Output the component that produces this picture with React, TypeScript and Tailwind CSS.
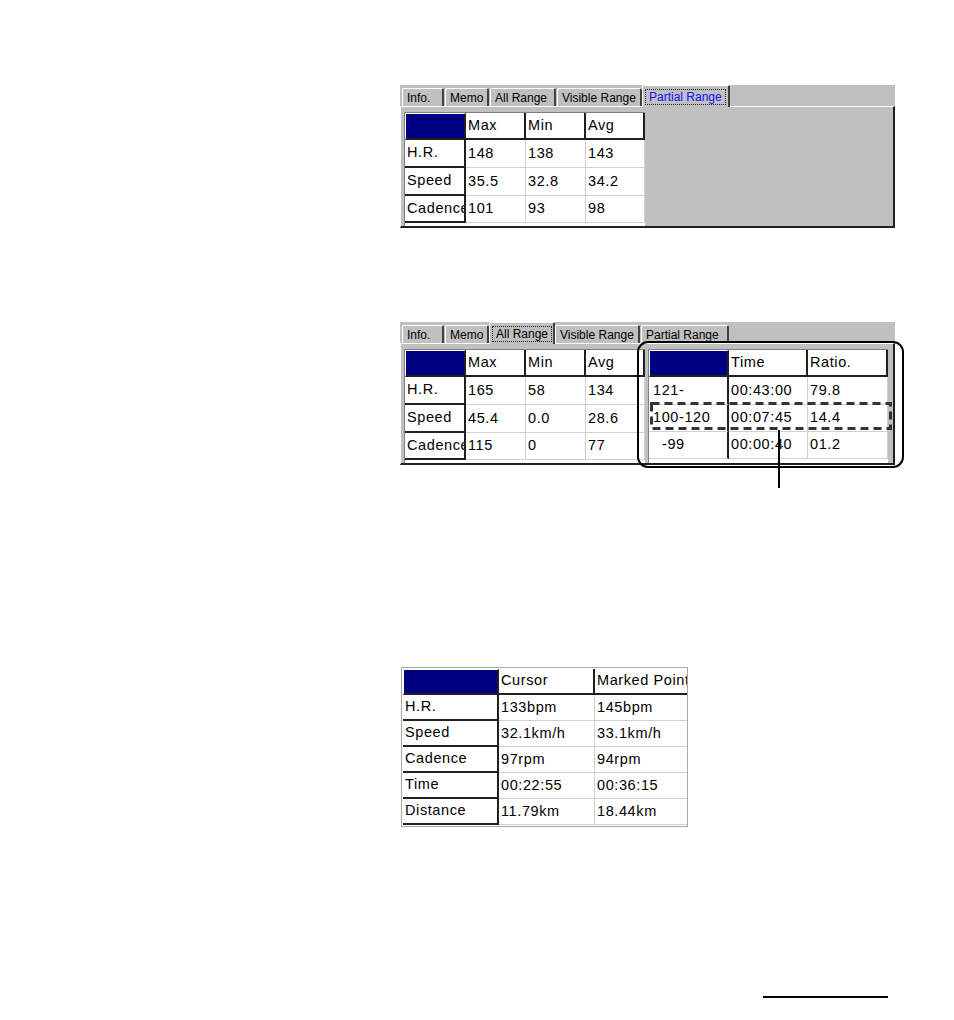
import React from "react";

const FONT = { fontFamily: '"Liberation Sans", Arial, sans-serif' };

type TabDef = { label: string; w: number };
const TABS: TabDef[] = [
  { label: "Info.", w: 42 },
  { label: "Memo", w: 44 },
  { label: "All Range", w: 66 },
  { label: "Visible Range", w: 85 },
  { label: "Partial Range", w: 88 },
];

function Tabs({ selected, blue }: { selected: number; blue?: boolean }) {
  return (
    <div className="flex items-end h-[21px] pl-[2px] gap-[1px]">
      {TABS.map((t, i) => {
        const sel = i === selected;
        return (
          <div
            key={t.label}
            style={{ width: t.w }}
            className={
              sel
                ? "relative z-10 h-[22px] -mb-px -mx-[1px] bg-[#c0c0c0] border-t border-l border-white border-r-2 border-r-[#404040] rounded-t-[2px] flex items-center px-[2px]"
                : "h-[18px] bg-[#c0c0c0] border-t border-l border-white border-r-2 border-r-[#404040] rounded-t-[2px] flex items-center px-[4px]"
            }
          >
            {sel ? (
              <span
                className={
                  "border border-dotted border-[#202020] px-[3px] leading-[14px] text-[12px] whitespace-nowrap " +
                  (blue ? "text-[#1010ff]" : "text-black")
                }
              >
                {t.label}
              </span>
            ) : (
              <span className="text-[12px] whitespace-nowrap text-black">{t.label}</span>
            )}
          </div>
        );
      })}
    </div>
  );
}

type Kind = "corner" | "head" | "label" | "data" | "labelData";

function Cell({ kind, w, h, text, indent }: { kind: Kind; w: number; h: number; text?: string; indent?: number }) {
  let cls = "shrink-0 flex items-center overflow-hidden whitespace-nowrap text-[14.5px] tracking-[0.6px] text-black ";
  if (kind === "corner") cls += "bg-[#000080] border-r-2 border-b-2 border-[#202020] border-t border-l border-t-white border-l-white";
  else if (kind === "head") cls += "bg-white border-r-2 border-b-2 border-[#202020] pl-[2px]";
  else if (kind === "label") cls += "bg-white border-r-2 border-b-2 border-[#202020] pl-[2px]";
  else if (kind === "labelData") cls += "bg-white border-r-2 border-r-[#202020] border-b border-b-[#d0d0d0] pl-[4px]";
  else cls += "bg-white border-r border-b border-[#d0d0d0] pl-[2px]";
  return (
    <div className={cls} style={{ width: w, height: h, paddingLeft: indent }}>
      {text}
    </div>
  );
}

function StatTable({ rows }: { rows: string[][] }) {
  const widths = [61, 60, 60, 59];
  const heights = [27, 28, 28, 27];
  return (
    <div className="border-t border-l border-[#808080] bg-white">
      {rows.map((r, ri) => (
        <div key={ri} className="flex">
          {r.map((c, ci) => (
            <Cell
              key={ci}
              kind={ri === 0 ? (ci === 0 ? "corner" : "head") : ci === 0 ? "label" : "data"}
              w={widths[ci]}
              h={heights[ri]}
              text={c}
            />
          ))}
        </div>
      ))}
    </div>
  );
}

const T1 = [
  ["", "Max", "Min", "Avg"],
  ["H.R.", "148", "138", "143"],
  ["Speed", "35.5", "32.8", "34.2"],
  ["Cadence", "101", "93", "98"],
];
const T2 = [
  ["", "Max", "Min", "Avg"],
  ["H.R.", "165", "58", "134"],
  ["Speed", "45.4", "0.0", "28.6"],
  ["Cadence", "115", "0", "77"],
];
const Z = [
  ["", "Time", "Ratio."],
  ["121-", "00:43:00", "79.8"],
  ["100-120", "00:07:45", "14.4"],
  ["-99", "00:00:40", "01.2"],
];
const P3 = [
  ["", "Cursor", "Marked Point"],
  ["H.R.", "133bpm", "145bpm"],
  ["Speed", "32.1km/h", "33.1km/h"],
  ["Cadence", "97rpm", "94rpm"],
  ["Time", "00:22:55", "00:36:15"],
  ["Distance", "11.79km", "18.44km"],
];

function ZoneTable() {
  const widths = [80, 79, 80];
  const heights = [27, 28, 27, 27];
  return (
    <div className="border-t border-l border-[#808080] bg-white">
      {Z.map((r, ri) => (
        <div key={ri} className="flex">
          {r.map((c, ci) => (
            <Cell
              key={ci}
              kind={ri === 0 ? (ci === 0 ? "corner" : "head") : ci === 0 ? "labelData" : "data"}
              w={widths[ci]}
              h={heights[ri]}
              text={c}
              indent={ri === 3 && ci === 0 ? 13 : undefined}
            />
          ))}
        </div>
      ))}
    </div>
  );
}

function Panel({ children, selected, blue }: { children: React.ReactNode; selected: number; blue?: boolean }) {
  return (
    <div className="w-[495px] bg-[#c0c0c0]">
      <Tabs selected={selected} blue={blue} />
      <div className="h-[122px] border-t border-l border-t-white border-l-white border-r-2 border-b-2 border-r-[#202020] border-b-[#202020] pt-[5px] pl-[3px] flex gap-[3px]">
        {children}
      </div>
    </div>
  );
}

export default function App() {
  return (
    <div className="relative w-[954px] h-[1020px] bg-white overflow-hidden" style={FONT}>
      <div className="pt-[85px] pl-[400px]">
        <Panel selected={4} blue>
          <StatTable rows={T1} />
        </Panel>
      </div>
      <div className="pt-[94px] pl-[400px]">
        <Panel selected={2}>
          <StatTable rows={T2} />
          <ZoneTable />
        </Panel>
      </div>
      <div className="pt-[202px] pl-[401px]">
        <div className="w-[287px] border border-[#a8a8a8] p-px bg-white">
          <div className="overflow-hidden w-[284px]">
            {P3.map((r, ri) => (
              <div key={ri} className="flex">
                {r.map((c, ci) => (
                  <Cell
                    key={ci}
                    kind={ri === 0 ? (ci === 0 ? "corner" : "head") : ci === 0 ? "label" : "data"}
                    w={ci === 2 ? 94 : 96}
                    h={26}
                    text={c}
                  />
                ))}
              </div>
            ))}
          </div>
        </div>
      </div>
      <div className="pt-[169px] pl-[763px]">
        <div className="w-[125px] h-[2px] bg-black" />
      </div>

      {/* callout overlays */}
      <div className="absolute left-[637px] top-[341px] w-[267px] h-[127px] border-2 border-black rounded-[11px] pointer-events-none" />
      <svg className="absolute left-0 top-0 pointer-events-none" width="954" height="1020">
        <rect x="651.5" y="403.5" width="239" height="25" fill="none" stroke="#333" strokeWidth="3" strokeDasharray="8 5" />
        <line x1="779" y1="430" x2="779" y2="488" stroke="black" strokeWidth="2" />
      </svg>
    </div>
  );
}
